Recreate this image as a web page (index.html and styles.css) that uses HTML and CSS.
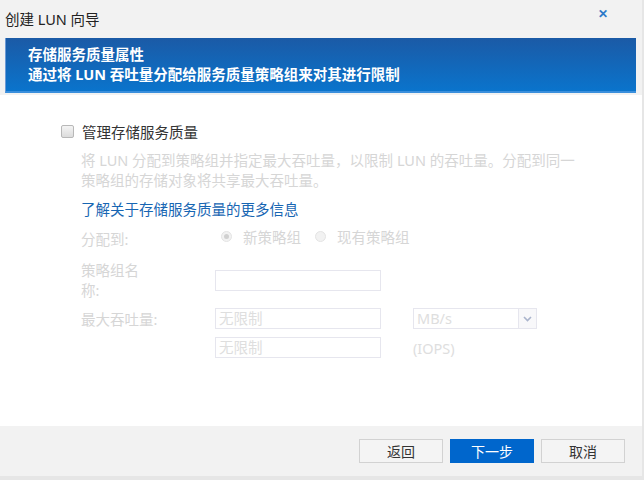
FILE: index.html
```html
<!DOCTYPE html>
<html lang="zh-CN">
<head>
    <meta charset="UTF-8">
    <title>创建 LUN 向导</title>
    <link rel="stylesheet" href="styles.css">
</head>
<body>
    <div class="dialog">
        <div class="title-bar">
            <span class="title">创建 LUN 向导</span>
            <span class="close">&#x2715;</span>
        </div>
        <div class="banner">
            <div class="banner-title">存储服务质量属性</div>
            <div class="banner-sub">通过将 LUN 吞吐量分配给服务质量策略组来对其进行限制</div>
        </div>
        <div class="content">
            <label class="check-row">
                <span class="checkbox"></span>
                <span>管理存储服务质量</span>
            </label>
            <div class="section">
                <div class="desc">将 LUN 分配到策略组并指定最大吞吐量，以限制 LUN 的吞吐量。分配到同一策略组的存储对象将共享最大吞吐量。</div>
                <a class="link" href="#">了解关于存储服务质量的更多信息</a>
                <div class="form">
                    <div class="label">分配到:</div>
                    <div class="radios">
                        <span class="radio checked"></span><span>新策略组</span>
                        <span class="radio"></span><span>现有策略组</span>
                    </div>
                    <div class="label two-line">策略组名<br>称:</div>
                    <div class="field-row"><span class="input"></span></div>
                    <div class="label">最大吞吐量:</div>
                    <div class="field-row">
                        <span class="input">无限制</span>
                        <span class="select"><span class="select-text">MB/s</span><span class="select-btn"><svg width="9" height="6" viewBox="0 0 9 6"><path d="M1 1l3.5 3.5L8 1" fill="none" stroke="#aab4cc" stroke-width="1.6"/></svg></span></span>
                    </div>
                    <div class="label"></div>
                    <div class="field-row">
                        <span class="input">无限制</span>
                        <span class="unit">(IOPS)</span>
                    </div>
                </div>
            </div>
        </div>
        <div class="footer">
            <button class="btn">返回</button>
            <button class="btn primary">下一步</button>
            <button class="btn">取消</button>
        </div>
    </div>
</body>
</html>
```

FILE: styles.css
```css
body {
    margin: 0;
    width: 644px;
    height: 480px;
    background: #e6e6e6;
    font-family: "Noto Sans", "Noto Sans CJK SC", sans-serif;
    font-size: 14.5px;
    color: #333;
    overflow: hidden;
}
.dialog {
    width: 642px;
    height: 476px;
    background: #f2f2f2;
    display: flex;
    flex-direction: column;
}
.title-bar {
    height: 38px;
    display: flex;
    align-items: center;
    justify-content: space-between;
    padding: 0 34px 2px 5px;
    box-sizing: border-box;
}
.title {
    font-size: 14.5px;
    color: #222;
}
.close {
    color: #2b79c8;
    font-size: 12px;
    font-weight: bold;
    margin-top: -10px;
}
.banner {
    margin: 0 6px 0 5px;
    height: 55px;
    box-sizing: border-box;
    padding: 6px 0 0 22px;
    background: linear-gradient(#1b5aa6, #0a74cc);
    border-left: 1px solid #6b9ad6;
    border-bottom: 2px solid #3a8fdc;
    color: #fff;
    font-weight: bold;
    line-height: 20px;
}
.content {
    flex: 1;
    background: #fff;
    margin-top: 2px;
    padding: 26px 0 0 61px;
}
.check-row {
    display: flex;
    align-items: center;
    gap: 8px;
    height: 20px;
}
.checkbox {
    width: 11px;
    height: 11px;
    border: 1px solid #b8b8b8;
    border-radius: 2px;
    background: linear-gradient(#f4f4f4, #dcdcdc);
}
.section {
    padding: 9px 0 0 20px;
    width: 520px;
}
.desc {
    color: #d6d6d6;
    line-height: 20px;
    width: 500px;
}
.link {
    display: block;
    margin-top: 9px;
    color: #1766b3;
    text-decoration: none;
    line-height: 20px;
}
.form {
    display: grid;
    grid-template-columns: 134px 1fr;
    row-gap: 8px;
    margin-top: 6px;
    color: #d6d6d6;
}
.label {
    line-height: 20px;
    display: flex;
    align-items: center;
}
.label.two-line {
    display: block;
}
.radios {
    display: flex;
    align-items: center;
    height: 22px;
    padding-left: 6px;
    margin-bottom: 5px;
}
.radio {
    width: 9px;
    height: 9px;
    border: 1px solid #e4e4e4;
    border-radius: 50%;
    background: #f2f2f2;
    margin-right: 11px;
    position: relative;
}
.radio + span {
    margin-right: 14px;
}
.radio.checked::after {
    content: "";
    position: absolute;
    left: 2px;
    top: 2px;
    width: 5px;
    height: 5px;
    border-radius: 50%;
    background: #d0d0d0;
}
.field-row {
    display: flex;
    align-items: center;
}
.input {
    width: 166px;
    height: 21px;
    border: 1px solid #e6e6ee;
    box-sizing: border-box;
    padding-left: 3px;
    line-height: 19px;
    color: #dedede;
}
.select {
    display: flex;
    margin-left: 32px;
    width: 124px;
    height: 21px;
    border: 1px solid #e6e6ee;
    box-sizing: border-box;
}
.select-text {
    flex: 1;
    padding-left: 3px;
    line-height: 19px;
    color: #dedede;
}
.select-btn {
    width: 17px;
    border-left: 1px solid #e6e6ee;
    background: #f8f8fa;
    display: flex;
    align-items: center;
    justify-content: center;
}
.unit {
    margin-left: 32px;
    color: #dedede;
}
.footer {
    height: 50px;
    display: flex;
    align-items: center;
    justify-content: flex-end;
    gap: 7px;
    padding-right: 17px;
}
.btn {
    width: 84px;
    height: 24px;
    border: 1px solid #d2d2d2;
    background: #f4f4f4;
    font-family: "Noto Sans CJK SC", sans-serif;
    font-size: 14px;
    color: #333;
    padding: 0;
}
.btn.primary {
    background: #0066cc;
    border-color: #0066cc;
    color: #fff;
}
```
